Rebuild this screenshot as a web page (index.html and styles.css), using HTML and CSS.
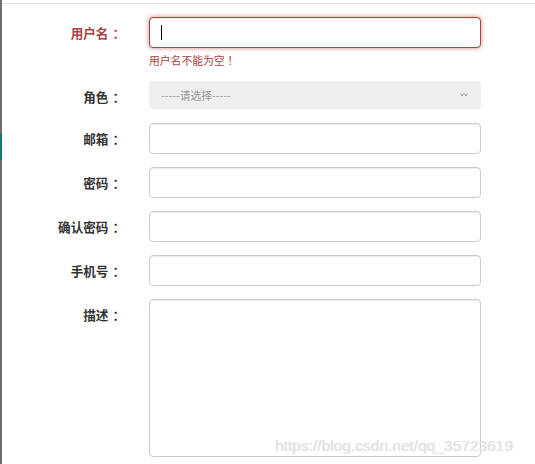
FILE: index.html
```html
<!DOCTYPE html>
<html lang="zh-CN">
<head>
    <meta charset="UTF-8">
    <meta name="viewport" content="width=device-width, initial-scale=1.0">
    <title>新增用户</title>
    <link rel="stylesheet" href="styles.css">
</head>
<body>
    <div class="page">
        <div class="side-strip">
            <div class="side-active"></div>
        </div>
        <div class="content">
            <form class="user-form">
                <div class="form-group has-error">
                    <label class="control-label" for="username">用户名<span class="punct">：</span></label>
                    <div class="field">
                        <div class="input-wrap">
                            <input class="form-control" id="username" type="text">
                            <span class="caret-line"></span>
                        </div>
                        <span class="help-block">用户名不能为空<span class="punct">！</span></span>
                    </div>
                </div>
                <div class="form-group select-group">
                    <label class="control-label" for="role">角色<span class="punct">：</span></label>
                    <div class="field">
                        <div class="select-box" id="role">
                            <span>-----请选择-----</span>
                            <svg class="select-arrow" width="8" height="4" viewBox="0 0 8 4">
                                <path d="M0.5 0.5 L2 3 L3.5 0.5 M4.5 0.5 L6 3 L7.5 0.5" fill="none" stroke="#a0a0a0" stroke-width="1"/>
                            </svg>
                        </div>
                    </div>
                </div>
                <div class="form-group">
                    <label class="control-label" for="email">邮箱<span class="punct">：</span></label>
                    <div class="field"><input class="form-control" id="email" type="text"></div>
                </div>
                <div class="form-group">
                    <label class="control-label" for="password">密码<span class="punct">：</span></label>
                    <div class="field"><input class="form-control" id="password" type="password"></div>
                </div>
                <div class="form-group">
                    <label class="control-label" for="confirm">确认密码<span class="punct">：</span></label>
                    <div class="field"><input class="form-control" id="confirm" type="password"></div>
                </div>
                <div class="form-group">
                    <label class="control-label" for="phone">手机号<span class="punct">：</span></label>
                    <div class="field"><input class="form-control" id="phone" type="text"></div>
                </div>
                <div class="form-group">
                    <label class="control-label" for="desc">描述<span class="punct">：</span></label>
                    <div class="field"><textarea class="form-control textarea" id="desc"></textarea></div>
                </div>
            </form>
        </div>
    </div>
    <div class="watermark">https://blog.csdn.net/qq_35723619</div>
</body>
</html>
```

FILE: styles.css
```css
html, body {
    margin: 0;
    padding: 0;
    background: #fff;
    height: 100%;
    overflow: hidden;
}
body {
    font-family: "Noto Sans CJK SC", "Liberation Sans", sans-serif;
    color: #333;
}
.page {
    display: flex;
    height: 100%;
}
.side-strip {
    width: 2px;
    flex: none;
    background-color: #6e6e6e;
}
.side-active {
    margin-top: 133px;
    height: 27px;
    background-color: #14796d;
}
.content {
    flex: 1;
    margin-top: 3px;
    border-top: 1px solid #e3e3e3;
    padding-top: 13px;
}
.form-group {
    display: flex;
    margin-bottom: 13px;
}
.control-label {
    width: 119px;
    padding-right: 28px;
    padding-top: 7px;
    text-align: right;
    font-size: 12.6px;
    line-height: 18px;
    font-weight: bold;
    color: #333;
}
/* full-width punctuation sits centred in its box in the original font */
.punct {
    padding-left: 4px;
    margin-right: -4px;
}
.help-block .punct {
    padding-left: 3px;
    margin-right: -3px;
}
.field {
    width: 332px;
    display: flex;
    flex-direction: column;
}
.form-control {
    display: block;
    box-sizing: border-box;
    width: 332px;
    height: 31px;
    margin: 0;
    padding: 5px 11px;
    border: 1px solid #ccc;
    border-radius: 4px;
    background: #fff;
    font-family: inherit;
    font-size: 12.6px;
    box-shadow: inset 0 1px 1px rgba(0, 0, 0, 0.075);
    outline: none;
}
.textarea {
    height: 158px;
    resize: none;
}
.input-wrap {
    position: relative;
}
.caret-line {
    position: absolute;
    left: 12px;
    top: 8px;
    width: 1px;
    height: 15px;
    background: #000;
}
.has-error .control-label {
    color: #a94442;
}
.has-error .form-control {
    border-color: #a94442;
    box-shadow: inset 0 1px 1px rgba(0, 0, 0, 0.075), 0 0 5px #ce8483;
}
.help-block {
    margin-top: 4px;
    font-size: 10.8px;
    line-height: 16px;
    color: #a94442;
}
.select-box {
    box-sizing: border-box;
    height: 28px;
    margin-bottom: 1px;
    padding: 0 12px;
    border-radius: 4px;
    background-color: #efefef;
    display: flex;
    align-items: center;
    justify-content: space-between;
    font-size: 10.8px;
    color: #999;
}
.select-arrow {
    margin-right: 1px;
}
.watermark {
    position: absolute;
    right: 22px;
    bottom: 9px;
    font-family: "Liberation Sans", Arial, sans-serif;
    font-size: 15.5px;
    line-height: 18px;
    color: #e6e6e6;
    text-shadow: 0 0 1px #cfcfcf;
}
```
